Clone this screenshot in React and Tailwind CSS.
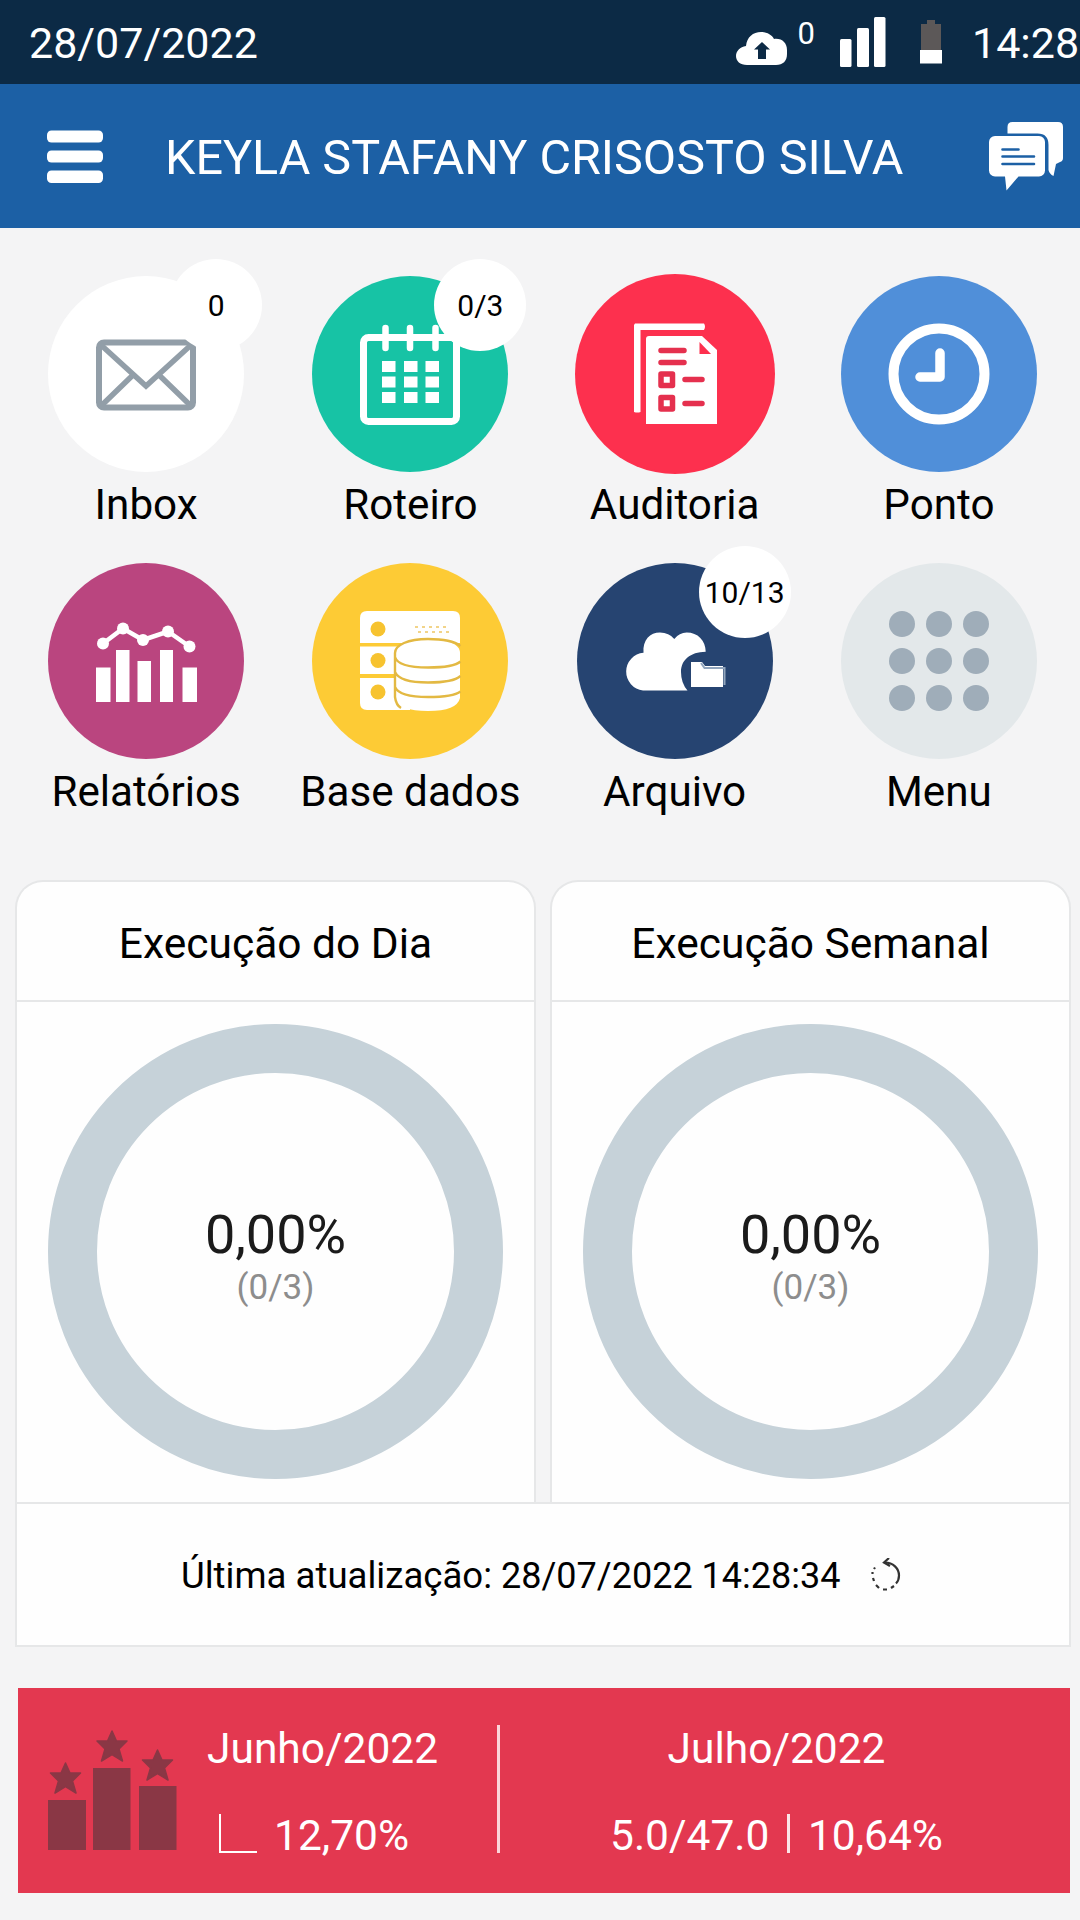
import React from "react";

const CloudUpload = () => (
  <svg viewBox="0 0 52 34" className="h-[34px] w-[52px]">
    <path d="M11 34C4 34 0 30 0 25c0-5 4-9 10-10C11 6 17 1 25 1c6 0 11 3 13 7 8-1 13 4 13 11v4c0 7-4 11-11 11z" fill="#fff" />
    <path d="M26 11l8 7.500h-4V28h-8v-9.500h-4z" fill="#0c2a45" />
  </svg>
);

const Signal = () => (
  <svg viewBox="0 0 48 50" className="h-[50px] w-[48px]" fill="#fff">
    <rect x="0" y="22" width="11.500" height="28" rx="1.500" />
    <rect x="17" y="11" width="12" height="39" rx="1.500" />
    <rect x="34" y="0" width="11.500" height="50" rx="1.500" />
  </svg>
);

const Battery = () => (
  <svg viewBox="0 0 22 44" className="h-[44px] w-[22px]">
    <path d="M7 0h8v4h6v26H1V4h6z" fill="#5c5858" />
    <rect y="30" width="22" height="13.500" fill="#fff" />
  </svg>
);

const Chat = () => (
  <svg viewBox="0 0 74 70" className="h-[70px] w-[74px]" fill="#fff">
    <path d="M23.500 0H69q5 0 5 5v31q0 3-3 4l-4 2-2.500 12q-4-2-5-6V23q0-11.500-11-11.500H18.500V5q0-5 5-5z" />
    <path d="M6 14h44a6 6 0 0 1 6 6v28.500a6 6 0 0 1-6 6H29.500L17.500 68.500l-1.500-14H6a6 6 0 0 1-6-6V20a6 6 0 0 1 6-6z" />
    <path d="M13.500 27.500h16M13.500 34.500h31.500M13.500 42h31.500" stroke="#1c60a5" strokeWidth="2.600" strokeLinecap="round" />
  </svg>
);

const Inbox = () => (
  <g fill="none" stroke="#929ea8" strokeWidth="6">
    <rect x="51" y="66.500" width="94" height="65" rx="5" />
    <path d="M53 69l45 41 45-41M54 129l31-30M142 129l-31-30" strokeWidth="5.500" />
  </g>
);

const Calendar = () => (
  <g fill="#fff">
    <rect x="51.500" y="61.500" width="93" height="84" rx="5" fill="none" stroke="#fff" strokeWidth="7" />
    <path d="M73.500 52v20M98 52v20M123.500 52v20" stroke="#fff" strokeWidth="6.500" strokeLinecap="round" />
    {[85, 100.5, 116].map((y) =>
      [70, 92, 113.5].map((x) => <rect key={`${x}-${y}`} x={x} y={y} width="13.500" height="11" />)
    )}
  </g>
);

const Audit = () => (
  <g>
    <path d="M58 47.500h69q2 3 0 6.500H63.500V136q-3 1-6.500 0V49z" fill="#fff" />
    <path d="M72 60h53l15 14v74H69V63q0-3 3-3z" fill="#fff" />
    <path d="M122.500 66v12H134z" fill="#fd304e" />
    <g fill="none" stroke="#e5304e" strokeWidth="5.500" strokeLinecap="round" strokeLinejoin="round">
      <path d="M84 74.500h23M84 86.500h23M108 103.500h17M108 127.500h17" />
      <rect x="84" y="98" width="11.500" height="11.500" />
      <rect x="84" y="121.500" width="11.500" height="11.500" />
    </g>
  </g>
);

const Clock = () => (
  <g fill="none" stroke="#fff">
    <circle cx="98" cy="98" r="45.500" strokeWidth="10" />
    <path d="M99 77v24H79" strokeWidth="9.500" strokeLinecap="round" strokeLinejoin="round" />
  </g>
);

const Reports = () => (
  <g fill="#fff">
    <path d="M48 104.500h14.500v34.500H48zM68 87h13.500v52H68zM89.500 98h13.500v41H89.500zM112 87h13v52H112zM134.500 104.500H149v34.500h-14.500z" />
    <path d="M55 80.500L75 65.500l20 11.500L120 68.500l21.500 15" fill="none" stroke="#fff" strokeWidth="4.500" />
    <circle cx="55" cy="80.500" r="6" />
    <circle cx="75" cy="65.500" r="6" />
    <circle cx="95" cy="77" r="6" />
    <circle cx="120" cy="68.500" r="6" />
    <circle cx="141.500" cy="83.500" r="6" />
  </g>
);

const Database = () => (
  <g>
    <path d="M55 48h86q7 0 7 7v25H48V55q0-7 7-7zM48 83.500h50V111H48zM48 115h50v32H55q-7 0-7-7z" fill="#fff" />
    <g fill="#f7c32f">
      <circle cx="66" cy="66" r="7.500" />
      <circle cx="66" cy="97.500" r="7.500" />
      <circle cx="66" cy="129" r="7.500" />
    </g>
    <path d="M103 64h31M106 69h31" stroke="#f2d489" strokeWidth="2" strokeDasharray="3 4" />
    <path d="M83 90c0-9 14-14 33-14s32 5 32 14v45q-3 13-32 13t-33-13z" fill="#fff" />
    <path d="M148.500 83q-9-7-32.500-7c-20 0-33 6-33 14v44q1 8 6 11M83 94c2 7 14 10.500 33 10.500 16 0 28-2 32.500-6M83 109c3 7 14 10.500 33 10.500 16 0 28-2.500 32.500-6.500M83 124c3 7 14 10 33 10 16 0 28-2 32.500-5.500" fill="none" stroke="#e3b943" strokeWidth="2.400" />
  </g>
);

const Archive = () => (
  <g transform="translate(-1 0)">
    <path d="M67 127.500A19 19 0 0 1 67.500 89.700C66.500 77 74 69.500 84 69.500q9 0 14.300 6.500 5-6.500 12.400-6.500c11 0 19 8 19 19.200C114 89 105 97 105 109q0 11 6.500 18.500z" fill="#fff" />
    <path d="M115 99h11l3 4h18v21h-32z" fill="#fff" />
    <path d="M125 100l3.500 5h20v17" fill="none" stroke="#91a5bd" strokeWidth="2" />
  </g>
);

const Grid = () => (
  <g fill="#9fadb9">
    {[61, 98, 135].map((y) => [61, 98, 135].map((x) => <circle key={`${x}-${y}`} cx={x} cy={y} r="13" />))}
  </g>
);

const shortcuts = [
  { label: "Inbox", color: "bg-white", Icon: Inbox, badge: "0" },
  { label: "Roteiro", color: "bg-[#17c3a5]", Icon: Calendar, badge: "0/3" },
  { label: "Auditoria", color: "bg-[#fd304e] ring-2 ring-[#fd304e]", Icon: Audit },
  { label: "Ponto", color: "bg-[#508fd9]", Icon: Clock },
  { label: "Relatórios", color: "bg-[#ba457f]", Icon: Reports },
  { label: "Base dados", color: "bg-[#fdcb35]", Icon: Database },
  { label: "Arquivo", color: "bg-[#264471]", Icon: Archive, badge: "10/13" },
  { label: "Menu", color: "bg-[#e3e8ea]", Icon: Grid },
];

function Shortcut({ label, color, Icon, badge }) {
  return (
    <div className="flex h-[287px] flex-col items-center">
      <div className={`relative size-[196px] rounded-full ${color}`}>
        <svg viewBox="0 0 196 196" className="size-[196px]">
          <Icon />
        </svg>
        {badge && (
          <div className="absolute -top-[17px] left-[122px] flex size-[92px] items-center justify-center rounded-full bg-white text-[30px]">
            {badge}
          </div>
        )}
      </div>
      <div className="mt-[9px] whitespace-nowrap text-[42.200px] leading-[48px]">{label}</div>
    </div>
  );
}

function Gauge({ title }) {
  return (
    <section className="flex h-[624px] w-[521px] flex-col rounded-t-[28px] border-2 border-b-0 border-[#e6e7e8] bg-[#fefefe]">
      <h2 className="h-[120px] border-b-2 border-[#e6e7e8] text-center text-[42.500px] leading-[124px]">{title}</h2>
      <div className="mx-auto mt-[22px] flex size-[455px] flex-col items-center rounded-full border-[49px] border-[#c6d2d9] pt-[129px]">
        <div className="text-[54px] leading-[66px] text-[#1b1b1b]">0,00%</div>
        <div className="text-[35px] leading-[40px] text-[#8d8d8d]">(0/3)</div>
      </div>
    </section>
  );
}

const Star = ({ x, y }) => (
  <path
    transform={`translate(${x} ${y})`}
    d="M0-16l4.500 10H15L7 2l3.500 12L0 7.500-10.500 14-7 2l-8-8h10.500z"
    stroke="#8a3745"
    strokeWidth="1.500"
    strokeLinejoin="round"
  />
);

export default function App() {
  return (
    <div className="flex h-[1920px] w-[1080px] flex-col overflow-hidden bg-[#f4f4f5] font-[Roboto,sans-serif] text-black">
      <div className="flex h-[84px] shrink-0 items-center bg-[#0c2a45] pl-[29px] text-[43px] text-white">
        <span className="pt-0.5">28/07/2022</span>
        <span className="ml-auto pt-[11px]"><CloudUpload /></span>
        <span className="ml-[10px] pb-[18px] text-[31px] leading-none">0</span>
        <span className="ml-[25px]"><Signal /></span>
        <span className="ml-[32px]"><Battery /></span>
        <span className="ml-[30px] w-[108px] whitespace-nowrap pt-0.5">14:28</span>
      </div>

      <header className="flex h-[144px] shrink-0 items-center bg-[#1c60a5] pl-[47px] pt-0.5 text-white">
        <svg viewBox="0 0 56 54" className="h-[54px] w-[56px]" fill="#fff">
          <rect y="0.500" width="56" height="12" rx="4.500" />
          <rect y="20.500" width="56" height="12" rx="4.500" />
          <rect y="40.500" width="56" height="12.500" rx="4.500" />
        </svg>
        <h1 className="ml-[62px] whitespace-nowrap pt-0.5 text-[48.500px]">KEYLA STAFANY CRISOSTO SILVA</h1>
        <span className="ml-auto mr-[17px]"><Chat /></span>
      </header>

      <main className="flex flex-col">
        <div className="ml-[14px] grid w-[1057px] grid-cols-4 pt-[48px]">
          {shortcuts.map((s) => (
            <Shortcut key={s.label} {...s} />
          ))}
        </div>

        <div className="ml-[15px] mr-[9px] mt-[30px] flex justify-between">
          <Gauge title="Execução do Dia" />
          <Gauge title="Execução Semanal" />
        </div>
        <div className="-mt-[2px] ml-[15px] mr-[9px] flex h-[145px] items-center border-2 border-[#e6e7e8] bg-[#fefefe] pl-[164px] text-[36px]">
          <div className="flex items-baseline gap-[9px] whitespace-nowrap pt-1">
            <span className="text-[36.600px]">Última atualização:</span>
            <span>28/07/2022 14:28:34</span>
          </div>
          <svg viewBox="0 0 32 34" className="ml-[30px] h-[34px] w-[32px]" fill="none" stroke="#333" strokeWidth="2.200">
            <path d="M15 4.500c8 0 14 6 14 13 0 3-1 6-3 8" />
            <path d="M24 28l-3 2M17 31.500h-4M9 30l-3-3M4 23l-1-3M2.500 16v-2M4 11l1-1.500" />
            <path d="M19 0l-5 4.500 6 3.500" />
          </svg>
        </div>

        <section className="ml-[18px] mr-[10px] mt-[41px] flex h-[205px] bg-[#e33850] text-[42.500px] leading-[50px] text-white">
          <svg viewBox="48 1720 130 132" className="ml-[30px] mt-[32px] h-[132px] w-[130px]" fill="#8a3745">
            <rect x="48" y="1800" width="38" height="50" />
            <rect x="93" y="1768" width="37.500" height="82" />
            <rect x="139" y="1786" width="37.500" height="64" />
            <Star x={65.5} y={1779} />
            <Star x={112} y={1747} />
            <Star x={157.5} y={1766} />
          </svg>
          <div className="ml-[29px] flex w-[231px] flex-col pt-[36px]">
            <span className="whitespace-nowrap">Junho/2022</span>
            <div className="mt-[37px] flex">
              <span className="ml-[12px] mt-[3px] h-[39px] w-[38px] border-b-2 border-l-2 border-white" />
              <span className="ml-[17px] whitespace-nowrap">12,70%</span>
            </div>
          </div>
          <div className="ml-[59px] mt-[37px] h-[128px] w-[2.500px] bg-[#fbd5da]" />
          <div className="flex w-[554px] flex-col items-center pt-[36px]">
            <span>Julho/2022</span>
            <div className="mt-[37px] flex">
              <span>5.0/47.0</span>
              <span className="ml-[18px] mt-[3px] h-[39px] w-[2.500px] bg-[#fbe5e8]" />
              <span className="ml-[18px]">10,64%</span>
            </div>
          </div>
        </section>
      </main>
    </div>
  );
}
